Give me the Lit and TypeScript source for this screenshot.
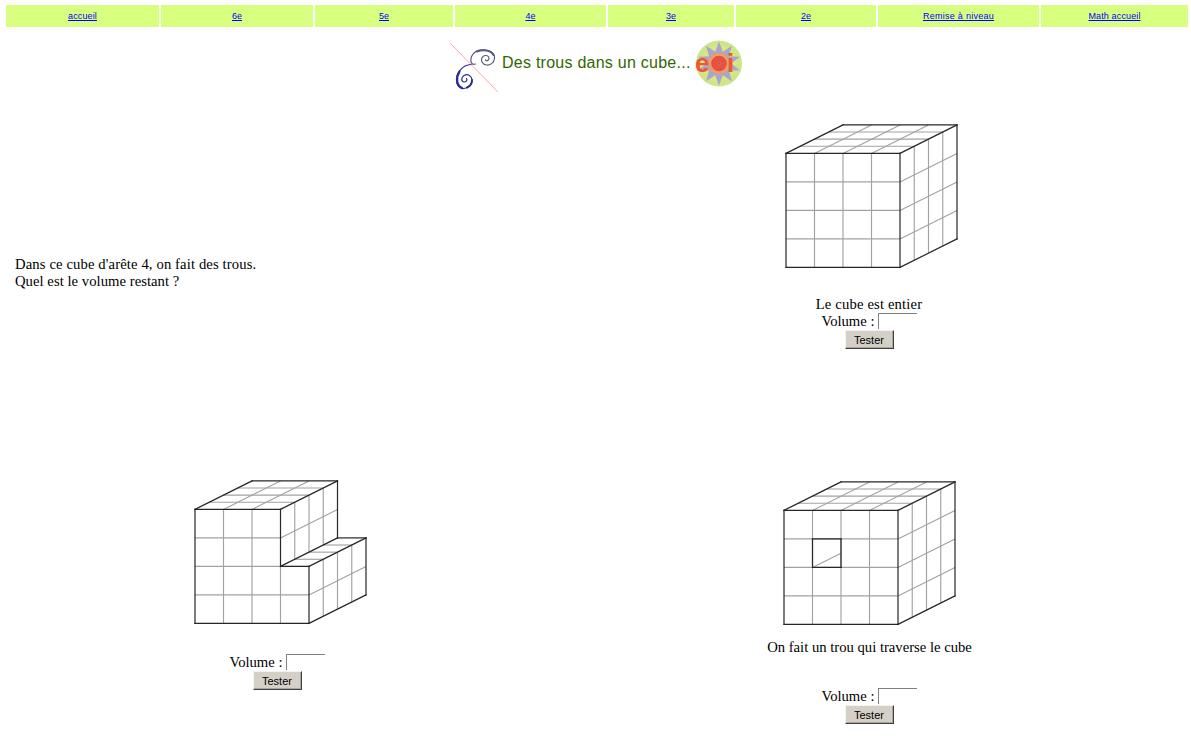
import { LitElement, html, svg, css } from "lit";
import { customElement, property } from "lit/decorators.js";

type Line = [number, number, number, number];

const U = 28.5;

// Projects a point given in small-cube units (x to the right, y down, z away).
const px = (x: number, z: number) => 1 + x * U + (z * U) / 2;
const py = (y: number, z: number) => 29.4 + y * U - (z * U) / 4;
const seg = (a: number[], b: number[]): Line => [
  px(a[0], a[2]), py(a[1], a[2]), px(b[0], b[2]), py(b[1], b[2]),
];

const fullGrid = (): Line[] => {
  const out: Line[] = [];
  for (let i = 1; i < 4; i++) {
    out.push(seg([i, 0, 0], [i, 4, 0]), seg([0, i, 0], [4, i, 0]));
    out.push(seg([i, 0, 0], [i, 0, 4]), seg([0, 0, i], [4, 0, i]));
    out.push(seg([4, 0, i], [4, 4, i]), seg([4, i, 0], [4, i, 4]));
  }
  return out;
};

const fullEdges = (): Line[] => [
  seg([0, 0, 0], [4, 0, 0]), seg([0, 0, 0], [0, 4, 0]),
  seg([0, 4, 0], [4, 4, 0]), seg([4, 0, 0], [4, 4, 0]),
  seg([0, 0, 0], [0, 0, 4]), seg([4, 0, 0], [4, 0, 4]),
  seg([0, 0, 4], [4, 0, 4]), seg([4, 0, 4], [4, 4, 4]),
  seg([4, 4, 0], [4, 4, 4]),
];

const stepGrid = (): Line[] => {
  const out: Line[] = [];
  for (let i = 1; i < 4; i++) {
    out.push(seg([i, i === 3 ? 2 : 0, 0], [i, 4, 0]));
    out.push(seg([0, i, 0], [i < 2 ? 3 : 4, i, 0]));
    out.push(seg([0, 0, i], [3, 0, i]));
    out.push(seg([3, 0, i], [3, 2, i]));
    out.push(seg([3, 2, i], [4, 2, i]));
    out.push(seg([4, 2, i], [4, 4, i]));
    if (i < 3) out.push(seg([i, 0, 0], [i, 0, 4]));
  }
  out.push(seg([3, 1, 0], [3, 1, 4]), seg([4, 3, 0], [4, 3, 4]));
  return out;
};

const stepEdges = (): Line[] => [
  seg([0, 0, 0], [3, 0, 0]), seg([0, 0, 0], [0, 4, 0]),
  seg([0, 4, 0], [4, 4, 0]), seg([3, 0, 0], [3, 2, 0]),
  seg([3, 2, 0], [4, 2, 0]), seg([4, 2, 0], [4, 4, 0]),
  seg([0, 0, 0], [0, 0, 4]), seg([3, 0, 0], [3, 0, 4]),
  seg([0, 0, 4], [3, 0, 4]), seg([3, 0, 4], [3, 2, 4]),
  seg([3, 2, 0], [3, 2, 4]), seg([4, 2, 0], [4, 2, 4]),
  seg([3, 2, 4], [4, 2, 4]), seg([4, 2, 4], [4, 4, 4]),
  seg([4, 4, 0], [4, 4, 4]),
];

@customElement("cube-figure")
export class CubeFigure extends LitElement {
  @property() kind = "full";

  static styles = css`
    :host { display: block; width: 174px; height: 145px; }
    svg { display: block; }
    .grid { stroke: #a2a2a2; stroke-width: 1.15; }
    .edge { stroke: #262626; stroke-width: 1.2; stroke-linecap: square; }
  `;

  render() {
    const step = this.kind === "step";
    const grid = step ? stepGrid() : fullGrid();
    const edges = step ? stepEdges() : fullEdges();
    if (this.kind === "hole") {
      grid.push(seg([1, 2, 0], [2, 1.5, 0]));
      edges.push(
        seg([1, 1, 0], [2, 1, 0]), seg([2, 1, 0], [2, 2, 0]),
        seg([1, 2, 0], [2, 2, 0]), seg([1, 1, 0], [1, 2, 0]),
      );
    }
    const draw = (l: Line, c: string) =>
      svg`<line class=${c} x1=${l[0]} y1=${l[1]} x2=${l[2]} y2=${l[3]}></line>`;
    return html`<svg width="174" height="145" viewBox="0 0 174 145">
      ${grid.map((l) => draw(l, "grid"))}${edges.map((l) => draw(l, "edge"))}
    </svg>`;
  }
}

@customElement("volume-form")
export class VolumeForm extends LitElement {
  static styles = css`
    :host { display: flex; flex-direction: column; align-items: center; }
    .row { display: flex; height: 17px; line-height: 17px; gap: 3px; margin-right: 1px; }
    .field {
      box-sizing: border-box; width: 39px; height: 16px; margin: 0; padding: 0 2px;
      border: 0 solid #808080; border-width: 1px 0 0 1px; border-radius: 0;
      background: #fff; outline: none;
    }
    .test {
      box-sizing: border-box; width: 49px; height: 19px; margin: 0 0 0 1px; padding: 1px 2px 0 0;
      border: 1px solid; border-color: #f4f2ee #404040 #404040 #f4f2ee;
      box-shadow: inset -1px -1px 0 #aaa69e;
      border-radius: 0; background: #d4d0c8; color: #000;
      font: 11px/15px "Liberation Sans", Arial, sans-serif;
    }
  `;

  render() {
    return html`
      <label class="row">Volume :<input class="field" type="text" /></label>
      <button class="test">Tester</button>
    `;
  }
}

const petals = [0, 36, 72, 108, 144, 180, 216, 252, 288, 324];

@customElement("app-root")
export class AppRoot extends LitElement {
  static styles = css`
    :host {
      display: block; box-sizing: border-box; height: 741px; overflow: hidden;
      padding: 5px 3px 0 6px; background: #fff; color: #000;
      font: 14.67px/17px "Liberation Serif", "Times New Roman", serif;
    }
    .nav {
      display: grid; gap: 2px; height: 22px;
      grid-template-columns: 153px 152px 138px 151px 126px 140px 161px 147px;
    }
    .tab {
      display: flex; align-items: center; justify-content: center;
      background: #d9ff80; font: 9px/12px "Liberation Sans", Arial, sans-serif;
    }
    .link { color: #0000ff; text-decoration: underline; }
    .wide { letter-spacing: 0.27px; }
    .mid { letter-spacing: 0.13px; }
    .head { display: flex; height: 67px; padding: 13px 0 0 444px; box-sizing: border-box; }
    .title {
      margin: 14px 5px 0 4px; width: 188px; white-space: nowrap; color: #336600;
      font: 16px/18px "Liberation Sans", Arial, sans-serif; letter-spacing: 0.25px;
    }
    .board {
      display: grid; grid-template-columns: 527px 637px; column-gap: 10px;
      grid-template-rows: 356px 290px; padding-left: 8px;
    }
    .intro { align-self: center; padding: 1px 0 0 1px; }
    .first { letter-spacing: 0.12px; }
    .second { letter-spacing: 0.04px; }
    .cell { display: flex; flex-direction: column; align-items: center; }
    .whole { padding-top: 30px; }
    .whole cube-figure { margin: 0 0 27px 4px; }
    .legend { letter-spacing: 0.15px; margin-right: 1px; }
    .step { padding-top: 30px; }
    .step cube-figure { margin: 0 0 29px 6px; }
    .hole { padding-top: 31px; }
    .hole cube-figure { margin-bottom: 13px; }
    .hole volume-form { margin-top: 32px; }
  `;

  tabs = ["accueil", "6e", "5e", "4e", "3e", "2e", "Remise à niveau", "Math accueil"];

  tabClass(t: string) {
    return t.length > 13 ? "link wide" : t.length > 2 ? "link mid" : "link";
  }

  render() {
    return html`
      <nav class="nav">
        ${this.tabs.map((t) => html`<div class="tab"><a class=${this.tabClass(t)} href="#">${t}</a></div>`)}
      </nav>
      <header class="head">
        <svg width="48" height="54" viewBox="0 0 48 54" fill="none" stroke-linecap="round">
          <path d="M1 4 L48 52" stroke="#ffa6a6" stroke-width="1" />
          <g stroke="#2c2c96">
            <path d="M21 24.5 C12 25 6.500 33 6.500 40 C6.500 46 10 49 14 48.500 C19 48 22.500 44 22 39.500 C21.500 35.500 17.500 33.500 14 35.500 C11 37.500 11 41.500 14 42 C16.500 42 17.500 40 16.500 38.500" stroke-width="1.2" />
            <path d="M9.500 31.500 C5.500 38 6.500 46 12 48" stroke-width="2.3" />
            <path d="M22 40 C22 44 19.500 46.500 17 47.500" stroke-width="1.9" />
          </g>
          <g stroke="#595a80">
            <path d="M25.500 24 C21 25.500 20 21 21.500 16.500 C24 11 30 9.500 35 10 C41 10.500 45 14 44.500 18.500 C44 23 40 25.500 36.500 25 C32.500 24.500 30.500 20.500 32 17.500 C34 14.500 38.500 15 39 18 C39 20.500 37 21.500 35.500 20" stroke-width="1.2" />
            <path d="M27 11.500 C33 9 41 10 43.500 15" stroke-width="2" />
          </g>
        </svg>
        <h1 class="title">Des trous dans un cube...</h1>
        <svg width="48" height="48" viewBox="0 0 48 48">
          <circle cx="24" cy="23.5" r="23" fill="#cfe58a" />
          <circle cx="24" cy="23.5" r="18" fill="#d9e878" />
          ${petals.map((a) => svg`<path transform="rotate(${a} 24 23.5)" d="M19.800 13 L24 1.500 L28.200 13 Z" fill="#a4a6d3"></path>`)}
          <circle cx="24" cy="23.5" r="12" fill="#c3a0b0" />
          <circle cx="24" cy="23.5" r="10" fill="#efa05c" />
          <circle cx="24" cy="23.5" r="7.8" fill="#ee4b3e" />
          <circle cx="24" cy="23.5" r="5" fill="none" stroke="#c76a55" stroke-width="1.1" stroke-dasharray="2 1.2" />
          <circle cx="24" cy="23.5" r="2" fill="none" stroke="#d0705a" />
          <g fill="#f0582f" font-family="Liberation Sans, Arial, sans-serif" font-weight="700" font-size="26">
            <text x="0" y="32">e</text><text x="32" y="32">i</text>
          </g>
        </svg>
      </header>
      <main class="board">
        <div class="intro">
          <div class="first">Dans ce cube d'arête 4, on fait des trous.</div>
          <div class="second">Quel est le volume restant ?</div>
        </div>
        <section class="cell whole">
          <cube-figure kind="full"></cube-figure>
          <div class="legend">Le cube est entier</div>
          <volume-form></volume-form>
        </section>
        <section class="cell step">
          <cube-figure kind="step"></cube-figure>
          <volume-form></volume-form>
        </section>
        <section class="cell hole">
          <cube-figure kind="hole"></cube-figure>
          <div>On fait un trou qui traverse le cube</div>
          <volume-form></volume-form>
        </section>
      </main>
    `;
  }
}
